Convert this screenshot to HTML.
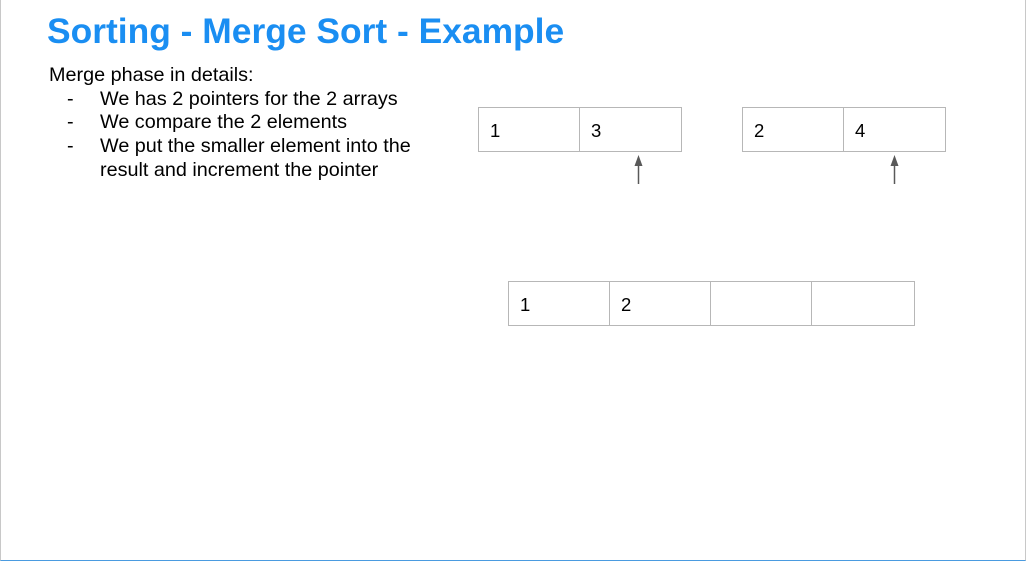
<!DOCTYPE html>
<html><head><style>
body{margin:0;width:1029px;height:562px;background:#fff;position:relative;overflow:hidden;font-family:"Liberation Sans",Arial,sans-serif;}
.frame{position:absolute;left:0;top:0;width:1024px;height:560px;border-left:1px solid #c8c8c8;border-right:1px solid #c8c8c8;border-bottom:1px solid #4a9be0;}
h1{position:absolute;left:47px;top:11px;margin:0;font-size:35.4px;font-weight:bold;color:#1a8ef2;}
.t{position:absolute;font-size:19.8px;color:#000;line-height:23.5px;white-space:nowrap;}
.tbl{position:absolute;display:flex;border:1px solid #b7b7b7;height:45px;box-sizing:border-box;}
.tbl div{width:101px;border-right:1px solid #b7b7b7;font-size:18.5px;padding:12px 0 0 11px;box-sizing:border-box;}
.tbl div:last-child{border-right:none}
</style></head><body>
<div class="frame"></div>
<h1>Sorting - Merge Sort - Example</h1>
<div class="t" style="left:49px;top:64px">Merge phase in details:</div>
<div class="t" style="left:67px;top:88px">-</div><div class="t" style="left:100px;top:88px">We has 2 pointers for the 2 arrays</div>
<div class="t" style="left:67px;top:111px">-</div><div class="t" style="left:100px;top:111px">We compare the 2 elements</div>
<div class="t" style="left:67px;top:135px">-</div><div class="t" style="left:100px;top:135px">We put the smaller element into the<br>result and increment the pointer</div>
<div class="tbl" style="left:478px;top:107px;width:204px"><div>1</div><div>3</div></div>
<div class="tbl" style="left:742px;top:107px;width:204px"><div>2</div><div>4</div></div>
<div class="tbl" style="left:508px;top:281px;width:407px"><div>1</div><div>2</div><div></div><div></div></div>
<svg style="position:absolute;left:0;top:0" width="1029" height="562">
<g stroke="#595959" stroke-width="1.5" fill="#595959">
<line x1="638.5" y1="163" x2="638.5" y2="184"/><polygon points="634.5,166 642.5,166 638.5,155" stroke="none"/>
<line x1="894.5" y1="163" x2="894.5" y2="184"/><polygon points="890.5,166 898.5,166 894.5,155" stroke="none"/>
</g></svg>
</body></html>
